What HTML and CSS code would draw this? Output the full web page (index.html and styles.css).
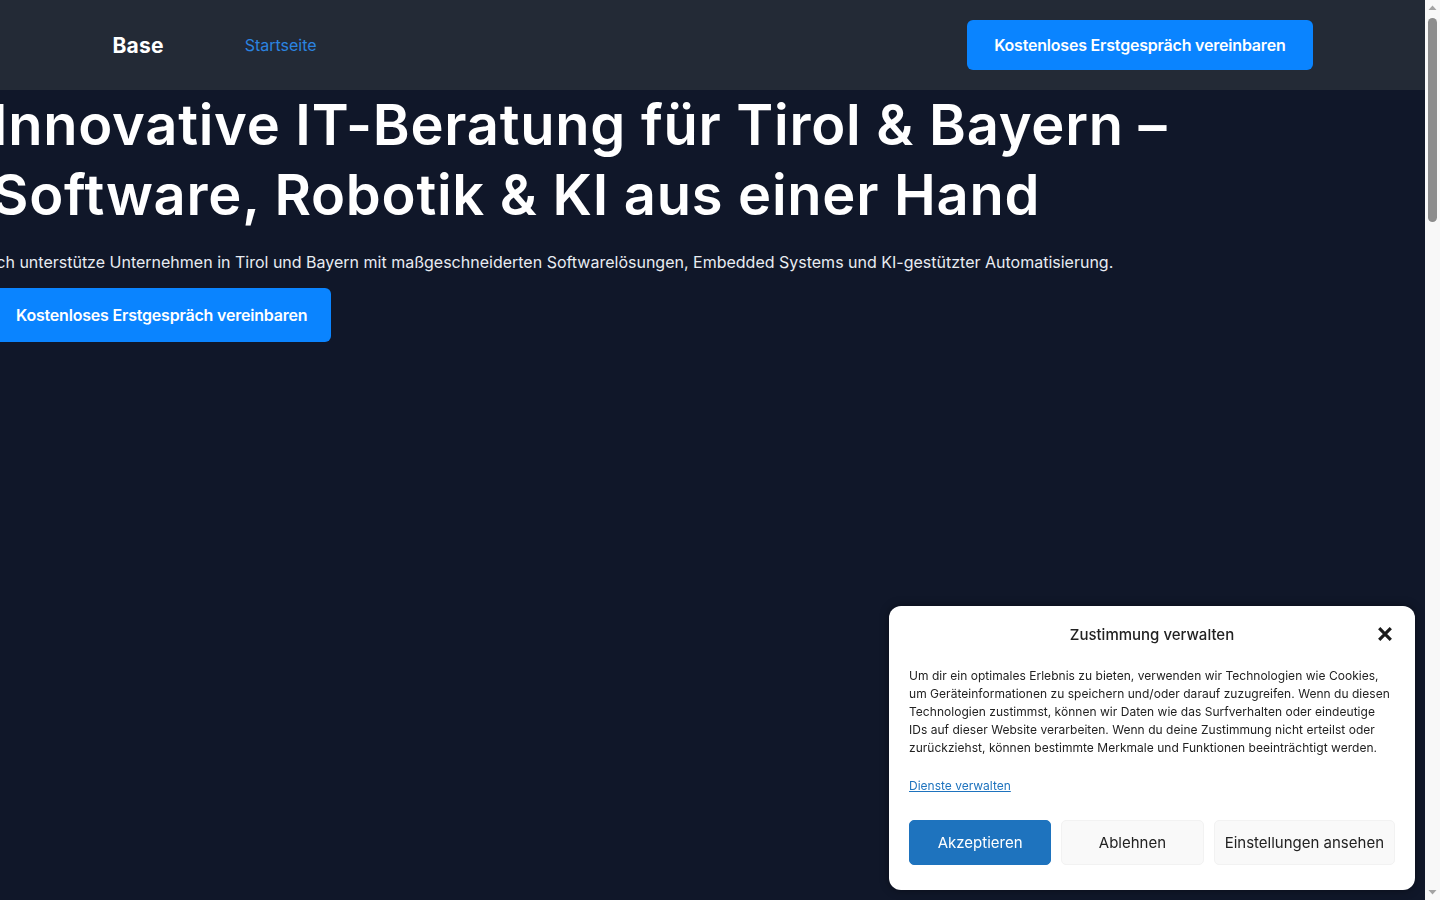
FILE: index.html
```html
<!DOCTYPE html>
<html lang="de">
<head>
<meta charset="utf-8">
<title>Base – IT-Beratung</title>
<link rel="stylesheet" href="styles.css">
</head>
<body>
<header class="site-header">
  <div class="header-inner">
    <div class="brand-nav">
      <a class="brand" href="#">Base</a>
      <nav class="main-nav"><a href="#" class="nav-link">Startseite</a></nav>
    </div>
    <a href="#" class="btn btn-primary">Kostenloses Erstgespräch vereinbaren</a>
  </div>
</header>
<main class="site-main">
  <section class="hero">
    <h1 class="hero-title">Innovative IT-Beratung für Tirol &amp; Bayern –<br>Software, Robotik &amp; KI aus einer Hand</h1>
    <p class="hero-text">Ich unterstütze Unternehmen in Tirol und Bayern mit maßgeschneiderten Softwarelösungen, Embedded Systems und KI-gestützter Automatisierung.</p>
    <a href="#" class="btn btn-primary btn-hero">Kostenloses Erstgespräch vereinbaren</a>
  </section>
</main>

<div class="cookie-banner" role="dialog" aria-label="Zustimmung verwalten">
  <div class="cookie-header">
    <div class="cookie-title">Zustimmung verwalten</div>
    <button class="cookie-close" aria-label="Schließen">
      <svg viewBox="0 0 16 16" width="16" height="16"><path d="M2.2 2.2 L13.8 13.8 M13.8 2.2 L2.2 13.8" stroke="#1a1a1a" stroke-width="3.2" stroke-linecap="butt"/></svg>
    </button>
  </div>
  <div class="cookie-message">Um dir ein optimales Erlebnis zu bieten, verwenden wir Technologien wie Cookies, um Geräteinformationen zu speichern und/oder darauf zuzugreifen. Wenn du diesen Technologien zustimmst, können wir Daten wie das Surfverhalten oder eindeutige IDs auf dieser Website verarbeiten. Wenn du deine Zustimmung nicht erteilst oder zurückziehst, können bestimmte Merkmale und Funktionen beeinträchtigt werden.</div>
  <a href="#" class="cookie-link">Dienste verwalten</a>
  <div class="cookie-buttons">
    <button class="cbtn cbtn-accept">Akzeptieren</button>
    <button class="cbtn">Ablehnen</button>
    <button class="cbtn">Einstellungen ansehen</button>
  </div>
</div>

<div class="fake-scrollbar" aria-hidden="true">
  <svg class="sb-arrow" viewBox="0 0 15 15" width="15" height="15"><path d="M3.5 10 L7.5 5.5 L11.5 10 Z" fill="#a3a3a3"/></svg>
  <div class="sb-track"><div class="sb-thumb"></div></div>
  <svg class="sb-arrow" viewBox="0 0 15 15" width="15" height="15"><path d="M3.5 5 L7.5 9.5 L11.5 5 Z" fill="#a3a3a3"/></svg>
</div>
</body>
</html>
```

FILE: styles.css
```css
* { box-sizing: border-box; }
html, body { margin: 0; padding: 0; }
body {
  background: #101729;
  color: #f1f5f9;
  font-family: Inter, "Liberation Sans", sans-serif;
  padding-right: 15px;
  overflow-x: hidden;
}
a { text-decoration: none; }

.site-header {
  background: #232a36;
  height: 90px;
}
.header-inner {
  max-width: 1200px;
  height: 90px;
  margin: 0 auto;
  display: flex;
  align-items: center;
  justify-content: space-between;
}
.brand-nav { display: flex; align-items: center; gap: 81px; }
.brand {
  color: #ffffff;
  font-size: 21px;
  font-weight: 700;
  letter-spacing: 0.2px;
}
.nav-link {
  color: #2b84e0;
  font-size: 16px;
}
.btn {
  display: inline-block;
  background: #0a84ff;
  color: #ffffff;
  font-weight: 600;
  font-size: 16px;
  line-height: 20px;
  letter-spacing: -0.2px;
  border-radius: 6px;
  white-space: nowrap;
}
.btn-primary { padding: 15px 27px; }

.site-main { min-height: 4000px; }
.hero {
  margin-left: -8px;
  display: flex;
  flex-direction: column;
  align-items: flex-start;
}
.hero-title {
  margin: 0;
  font-size: 56px;
  line-height: 70px;
  font-weight: 600;
  color: #ffffff;
  letter-spacing: 0.75px;
}
.hero-text {
  margin: 20px 0 14px;
  font-size: 16px;
  line-height: 24px;
  color: #e8ecf2;
}
.btn-hero { padding: 17px 24px; }

.cookie-banner {
  position: fixed;
  right: 25px;
  bottom: 10px;
  width: 526px;
  background: #ffffff;
  border-radius: 12px;
  padding: 18px 20px 25px;
  color: #222222;
  display: flex;
  flex-direction: column;
  box-shadow: 0 0 10px rgba(0,0,0,0.4);
  z-index: 10;
}
.cookie-header {
  display: grid;
  grid-template-columns: 40px 1fr 40px;
  align-items: center;
  height: 20px;
}
.cookie-title {
  grid-column: 2;
  text-align: center;
  font-size: 15px;
  font-weight: 500;
  color: #222;
}
.cookie-close {
  grid-column: 3;
  justify-self: end;
  margin-right: 2px;
  background: none;
  border: 0;
  padding: 0;
  width: 16px;
  height: 16px;
  display: flex;
}
.cookie-message {
  margin-top: 23px;
  margin-right: 2px;
  font-size: 12px;
  letter-spacing: 0.03px;
  line-height: 18px;
  color: #222;
}
.cookie-link {
  margin-top: 20px;
  align-self: flex-start;
  font-size: 12px;
  line-height: 18px;
  color: #1e73be;
  text-decoration: underline;
}
.cookie-buttons {
  margin-top: 25px;
  display: flex;
  gap: 10px;
}
.cbtn {
  flex: 1 1 0;
  height: 45px;
  padding: 0 10px;
  font-family: Inter, "Liberation Sans", sans-serif;
  font-size: 15px;
  white-space: nowrap;
  background: #f9f9f9;
  border: 1px solid #f2f2f2;
  border-radius: 5px;
  color: #222;
}
.cbtn-accept {
  background: #1e73be;
  border-color: #1e73be;
  color: #ffffff;
}

.fake-scrollbar {
  position: fixed;
  top: 0;
  right: 0;
  width: 15px;
  height: 100vh;
  background: #f8f8f8;
  display: flex;
  flex-direction: column;
  z-index: 20;
}
.sb-arrow { flex: none; display: block; }
.sb-track { flex: 1; padding: 3px 3px 0; }
.sb-thumb {
  width: 9px;
  height: 204px;
  background: #8c8c8c;
  border-radius: 5px;
}
```
